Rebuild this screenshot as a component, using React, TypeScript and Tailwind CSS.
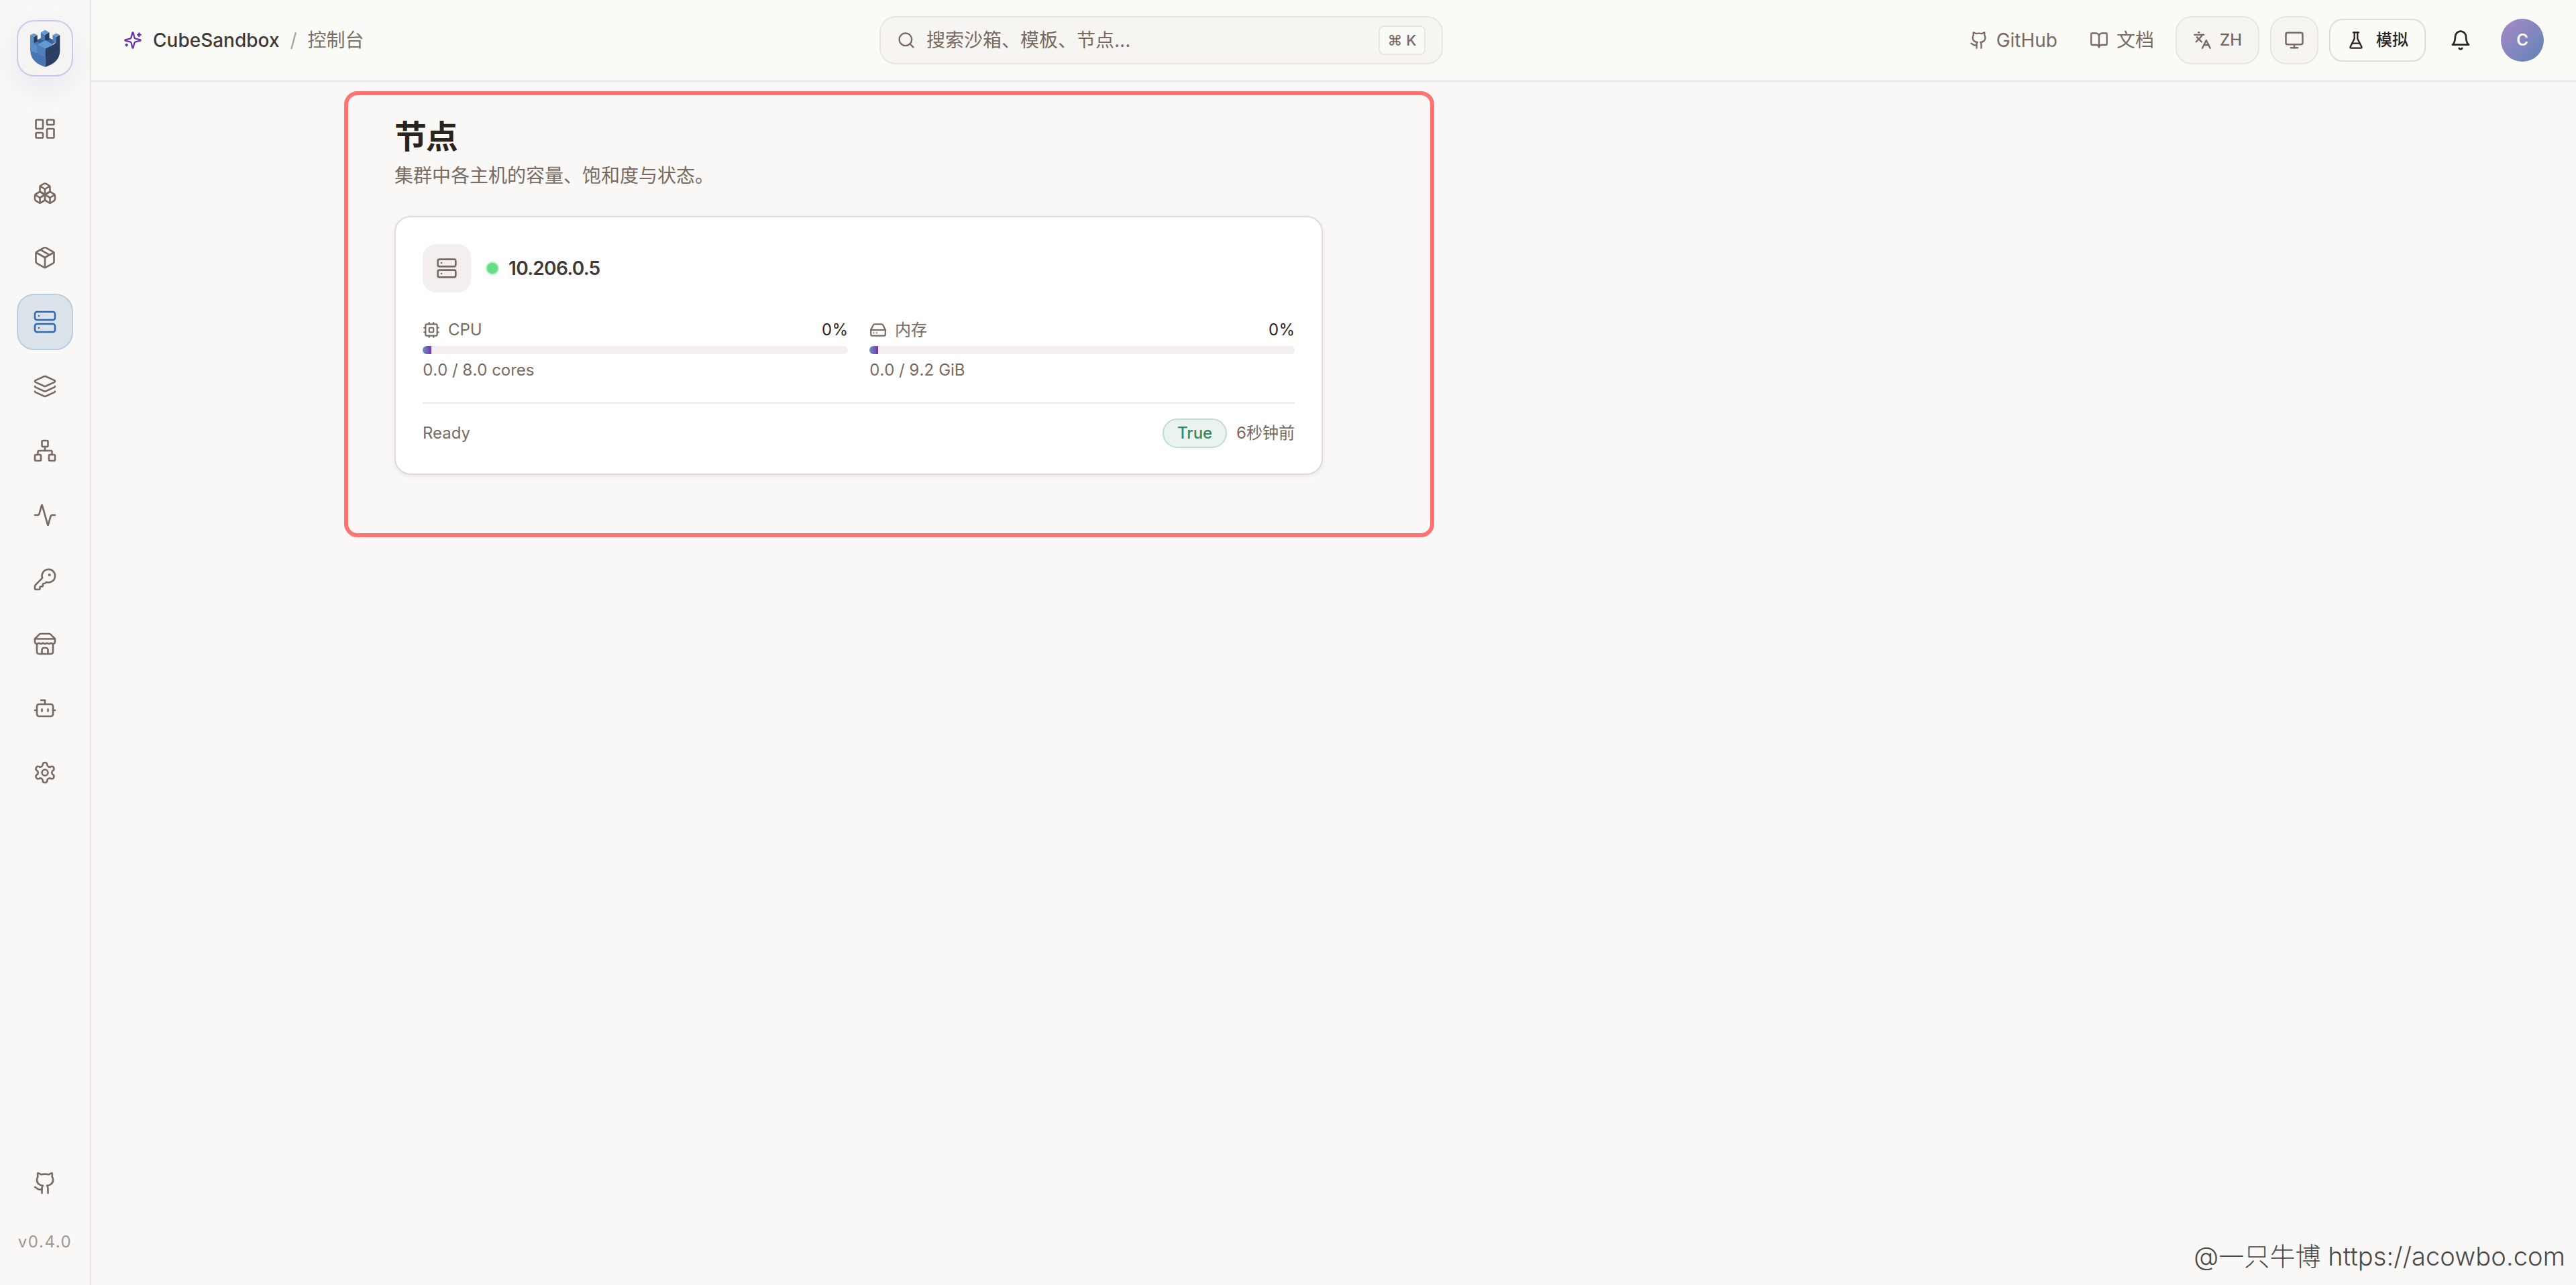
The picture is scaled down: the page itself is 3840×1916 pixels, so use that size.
import { type ReactNode } from 'react';
import {
  Activity,
  BookOpen,
  Bot,
  Boxes,
  createLucideIcon,
  Github,
  HardDrive,
  KeyRound,
  Languages,
  Layers,
  LayoutDashboard,
  type LucideIcon,
  Monitor,
  Network,
  Package,
  Search,
  Server,
} from 'lucide-react';

const Bell = createLucideIcon('Bell', [
  ['path', { d: 'M6 8a6 6 0 0 1 12 0c0 7 3 9 3 9H3s3-2 3-9', key: 'body' }],
  ['path', { d: 'M10.3 21a1.94 1.94 0 0 0 3.4 0', key: 'clapper' }],
]);

const Cpu = createLucideIcon('Cpu', [
  ['rect', { width: '16', height: '16', x: '4', y: '4', rx: '2', key: 'outer' }],
  ['rect', { width: '6', height: '6', x: '9', y: '9', rx: '1', key: 'inner' }],
  [
    'path',
    {
      d: 'M15 2v2M15 20v2M2 15h2M2 9h2M20 15h2M20 9h2M9 2v2M9 20v2',
      key: 'pins',
    },
  ],
]);

const Flask = createLucideIcon('Flask', [
  [
    'path',
    {
      d: 'M10 2v7.527a2 2 0 0 1-.211.896L4.72 20.55a1 1 0 0 0 .9 1.45h12.76a1 1 0 0 0 .9-1.45l-5.069-10.127A2 2 0 0 1 14 9.527V2',
      key: 'glass',
    },
  ],
  ['path', { d: 'M8.5 2h7M7 16h10', key: 'lines' }],
]);

const Settings = createLucideIcon('Settings', [
  [
    'path',
    {
      d: 'M12.22 2h-.44a2 2 0 0 0-2 2v.18a2 2 0 0 1-1 1.73l-.43.25a2 2 0 0 1-2 0l-.15-.08a2 2 0 0 0-2.73.73l-.22.38a2 2 0 0 0 .73 2.73l.15.1a2 2 0 0 1 1 1.72v.51a2 2 0 0 1-1 1.74l-.15.09a2 2 0 0 0-.73 2.73l.22.38a2 2 0 0 0 2.73.73l.15-.08a2 2 0 0 1 2 0l.43.25a2 2 0 0 1 1 1.73V20a2 2 0 0 0 2 2h.44a2 2 0 0 0 2-2v-.18a2 2 0 0 1 1-1.73l.43-.25a2 2 0 0 1 2 0l.15.08a2 2 0 0 0 2.73-.73l.22-.39a2 2 0 0 0-.73-2.73l-.15-.08a2 2 0 0 1-1-1.74v-.5a2 2 0 0 1 1-1.74l.15-.09a2 2 0 0 0 .73-2.73l-.22-.38a2 2 0 0 0-2.73-.73l-.15.08a2 2 0 0 1-2 0l-.43-.25a2 2 0 0 1-1-1.73V4a2 2 0 0 0-2-2z',
      key: 'gear',
    },
  ],
  ['circle', { cx: '12', cy: '12', r: '3', key: 'hub' }],
]);

const Sparkles = createLucideIcon('Sparkles', [
  [
    'path',
    {
      d: 'M9.937 15.5A2 2 0 0 0 8.5 14.063l-6.135-1.582a.5.5 0 0 1 0-.962L8.5 9.936A2 2 0 0 0 9.937 8.5l1.582-6.135a.5.5 0 0 1 .963 0L14.063 8.5A2 2 0 0 0 15.5 9.937l6.135 1.581a.5.5 0 0 1 0 .964L15.5 14.063a2 2 0 0 0-1.437 1.437l-1.582 6.135a.5.5 0 0 1-.963 0z',
      key: 'star',
    },
  ],
  ['path', { d: 'M20 3v4M22 5h-4M4 17v2M5 18H3', key: 'glints' }],
]);

const Store = createLucideIcon('Store', [
  [
    'path',
    {
      d: 'm2 7 4.41-4.41A2 2 0 0 1 7.83 2h8.34a2 2 0 0 1 1.42.59L22 7M2 7h20',
      key: 'roof',
    },
  ],
  [
    'path',
    {
      d: 'M4 12v8a2 2 0 0 0 2 2h12a2 2 0 0 0 2-2v-8M15 22v-4a2 2 0 0 0-2-2h-2a2 2 0 0 0-2 2v4',
      key: 'walls',
    },
  ],
  [
    'path',
    {
      d: 'M22 7v3a2 2 0 0 1-2 2a2.7 2.7 0 0 1-1.59-.63.7.7 0 0 0-.82 0A2.7 2.7 0 0 1 16 12a2.7 2.7 0 0 1-1.59-.63.7.7 0 0 0-.82 0A2.7 2.7 0 0 1 12 12a2.7 2.7 0 0 1-1.59-.63.7.7 0 0 0-.82 0A2.7 2.7 0 0 1 8 12a2.7 2.7 0 0 1-1.59-.63.7.7 0 0 0-.82 0A2.7 2.7 0 0 1 4 12a2 2 0 0 1-2-2V7',
      key: 'awning',
    },
  ],
]);

const NAV_ITEMS: { icon: LucideIcon; label: string; active?: boolean }[] = [
  { icon: LayoutDashboard, label: 'overview' },
  { icon: Boxes, label: 'sandboxes' },
  { icon: Package, label: 'templates' },
  { icon: Server, label: 'nodes', active: true },
  { icon: Layers, label: 'layers' },
  { icon: Network, label: 'network' },
  { icon: Activity, label: 'activity' },
  { icon: KeyRound, label: 'keys' },
  { icon: Store, label: 'store' },
  { icon: Bot, label: 'agents' },
  { icon: Settings, label: 'settings' },
];

function CubeLogo() {
  return (
    <svg className="h-[57px] w-[45px]" viewBox="135 132 134 168">
      {/* back wall */}
      <path d="M151 184 202 160 252 184 202 218Z" fill="#3a5f9b" />
      {/* left face */}
      <path
        d="M135 156 151 163V193L166 184 202 214V298C160 284 138 262 136 228Z"
        fill="#4876b3"
      />
      <path d="M135 156 151 163V193L166 201V236L135 226Z" fill="#5a8fca" />
      <path d="M166 198 202 216V256L166 236Z" fill="#4d80bd" />
      {/* right face */}
      <path
        d="M267 156 251 163V187L238 198 202 216V298C244 284 266 262 267 228Z"
        fill="#2c3e63"
      />
      <path
        d="M202 259 232 243M238 238 266 224"
        stroke="#4a5d85"
        strokeWidth="1.5"
        fill="none"
      />
      <path d="M151 163 167 156V184L151 193Z" fill="#2a3b60" />
      <path d="M235 156 251 163V192L235 183Z" fill="#4d80bd" />
      {/* middle tower */}
      <path d="M182 144 201 154V180L182 176Z" fill="#4a7ab8" />
      <path d="M201 154 220 144V176L201 180Z" fill="#2a3b60" />
      {/* tops */}
      <path d="M182 144 201 133 220 144 201 154Z" fill="#6699d2" />
      <path d="M135 156 151 148 167 156 151 164Z" fill="#6699d2" />
      <path d="M235 156 251 148 267 156 251 164Z" fill="#6699d2" />
      <path d="M167 198 202 179 238 198 202 217Z" fill="#6699d2" />
    </svg>
  );
}

function Sidebar() {
  return (
    <aside className="flex w-[136px] shrink-0 flex-col items-center border-r-2 border-[#e8e5e2] pt-[30px]">
      <div className="flex size-[84px] items-center justify-center rounded-[26px] border-2 border-[#cdc8ea] bg-[#f5f4f2] shadow-[0_16px_48px_-8px_rgba(90,80,200,0.16)]">
        <CubeLogo />
      </div>
      <nav className="mt-9 flex flex-col gap-3">
        {NAV_ITEMS.map(({ icon: Icon, label, active }) => (
          <button
            key={label}
            aria-label={label}
            className={
              active
                ? 'flex size-[84px] items-center justify-center rounded-[26px] border-2 border-[#bccddd] bg-[#dbe3ea] text-[#3468ae]'
                : 'flex size-[84px] items-center justify-center text-[#786a61]'
            }
          >
            <Icon className="size-9" strokeWidth={1.75} />
          </button>
        ))}
      </nav>
      <div className="mt-auto flex flex-col items-center">
        <button
          aria-label="github"
          className="flex size-[84px] items-center justify-center text-[#786a61]"
        >
          <Github className="size-9" strokeWidth={1.75} />
        </button>
        <span className="mt-[30px] mb-12 text-[24px] leading-8 tracking-[1.6px] text-[#a09791]">
          v0.4.0
        </span>
      </div>
    </aside>
  );
}

function HeaderLink({ icon: Icon, children }: { icon: LucideIcon; children: ReactNode }) {
  return (
    <a className="flex items-center gap-3 px-4 text-[28px] text-[#786a61]">
      <Icon className="size-7" />
      {children}
    </a>
  );
}

function Header() {
  return (
    <header className="flex h-[122px] shrink-0 items-center border-b-2 border-[#e8e5e2] bg-[#fafbf6] px-12">
      <div className="flex w-[1127px] shrink-0 items-center gap-4 text-[28px]">
        <Sparkles className="size-7 text-[#6d35ad]" />
        <span className="font-medium text-[#403a37]">CubeSandbox</span>
        <span className="text-[#aaa29d]">/</span>
        <span className="text-[#786f69]">控制台</span>
      </div>

      <div className="flex h-[72px] w-[840px] shrink-0 items-center rounded-3xl border-2 border-[#e9e5e2] bg-[#f6f5f2] px-6 text-[#786a61]">
        <Search className="size-7" />
        <span className="ml-4 text-[28px]">搜索沙箱、模板、节点...</span>
        <kbd className="ml-auto flex h-11 w-[70px] items-center justify-center rounded-lg border-2 border-[#e9e5e2] bg-[#f9f9f6] font-[Inter] text-[22px] font-medium">
          ⌘ K
        </kbd>
      </div>

      <div className="ml-auto flex items-center gap-4">
        <HeaderLink icon={Github}>GitHub</HeaderLink>
        <HeaderLink icon={BookOpen}>文档</HeaderLink>
        <button className="flex h-[72px] w-[125px] items-center justify-center gap-3 rounded-3xl border-2 border-[#e9e5e2] bg-[#f6f5f2] text-[24px] font-medium text-[#786a61]">
          <Languages className="size-7" />
          ZH
        </button>
        <button
          aria-label="theme"
          className="flex size-[72px] items-center justify-center rounded-3xl border-2 border-[#e9e5e2] bg-[#f6f5f2] text-[#786a61]"
        >
          <Monitor className="size-[30px]" />
        </button>
        <button className="flex h-16 w-36 items-center justify-center gap-4 rounded-[20px] border-2 border-[#e1dbd8] text-[24px] font-medium text-[#2a2320]">
          <Flask className="size-7" />
          模拟
        </button>
        <button
          aria-label="notifications"
          className="flex size-[72px] items-center justify-center text-[#2a2320]"
        >
          <Bell className="size-8" />
        </button>
        <div className="ml-2 flex size-16 items-center justify-center rounded-full bg-linear-to-br from-[#a888c8] to-[#5c84b6] text-[24px] font-semibold text-white">
          C
        </div>
      </div>
    </header>
  );
}

type UsageProps = {
  icon: LucideIcon;
  label: string;
  percent: number;
  detail: string;
};

function Usage({ icon: Icon, label, percent, detail }: UsageProps) {
  return (
    <div className="flex-1 text-[24px] leading-8 text-[#786a61]">
      <div className="flex items-center justify-between">
        <span className="flex items-center gap-3">
          <Icon className="size-[26px]" />
          {label}
        </span>
        <span className="text-[#2a2320] tabular-nums">{percent}%</span>
      </div>
      <div className="mt-2 h-3 overflow-hidden rounded-full bg-[#f2efee]">
        <div
          className="h-full bg-linear-to-r from-[#6a8fc0] to-[#6f32a8]"
          style={{ width: `${Math.max(percent, 2)}%` }}
        />
      </div>
      <p className="mt-2 tabular-nums">{detail}</p>
    </div>
  );
}

function NodeCard() {
  return (
    <section className="h-[386px] w-[1384px] rounded-3xl border-2 border-[#e0dbd8] bg-white px-10 pt-10 shadow-[0_2px_6px_rgba(60,40,30,0.07)]">
      <div className="flex items-center">
        <div className="flex size-[72px] items-center justify-center rounded-[20px] bg-[#f3efee] text-[#786a61]">
          <Server className="size-8" />
        </div>
        <span className="ml-6 size-4 rounded-full bg-[#65dd84] ring-2 ring-[#b9efc6]" />
        <span className="ml-4 text-[28px] font-semibold tracking-tight text-[#403a37]">
          10.206.0.5
        </span>
      </div>

      <div className="mt-10 flex gap-8">
        <Usage icon={Cpu} label="CPU" percent={0} detail="0.0 / 8.0 cores" />
        <Usage icon={HardDrive} label="内存" percent={0} detail="0.0 / 9.2 GiB" />
      </div>

      <div className="mt-8 flex items-center border-t-2 border-[#ece8e6] pt-[22px] text-[24px] leading-8 text-[#786a61]">
        <span>Ready</span>
        <span className="ml-auto flex h-11 w-24 items-center justify-center rounded-full border-2 border-[#bfdcd0] bg-[#eaf3ef] font-medium text-[#2c8d60]">
          True
        </span>
        <span className="ml-3.5">6秒钟前</span>
      </div>
    </section>
  );
}

export default function App() {
  return (
    <div className="relative flex h-[1916px] w-[3840px] overflow-hidden bg-[#f9f8f6] font-[Inter,'Noto_Sans_CJK_SC',sans-serif]">
      <Sidebar />
      <div className="flex flex-1 flex-col">
        <Header />
        <main className="pt-[50px] pl-[452px]">
          <h1 className="text-[48px] leading-[64px] font-semibold tracking-tight text-[#2a2320]">
            节点
          </h1>
          <p className="mt-1.5 text-[28px] leading-10 text-[#786a61]">
            集群中各主机的容量、饱和度与状态。
          </p>
          <div className="mt-10">
            <NodeCard />
          </div>
        </main>
      </div>

      {/* highlight frame over the page body */}
      <div className="pointer-events-none absolute top-[136px] left-[513px] h-[665px] w-[1625px] rounded-[20px] border-6 border-[#ff7370]" />
      <div className="absolute right-4 bottom-[18px] text-[38px] leading-[50px] font-light tracking-[0.1px] text-[#4a4a4a]">
        @一只牛博 https://acowbo.com
      </div>
    </div>
  );
}
